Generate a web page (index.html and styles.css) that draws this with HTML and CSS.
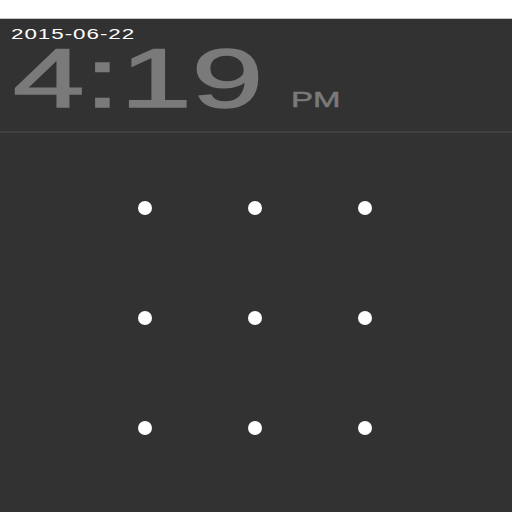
FILE: index.html
```html
<!DOCTYPE html>
<html>
<head>
<meta charset="utf-8">
<link rel="stylesheet" href="styles.css">
</head>
<body>
<div class="statusbar"></div>
<div class="clock">
  <div class="date"><span class="wide">2015-06-22</span></div>
  <div class="time"><span class="wide-time">4:19</span><span class="ampm">PM</span></div>
</div>
<div class="separator"></div>
<div class="pattern">
  <div class="cell"><span class="dot"></span></div>
  <div class="cell"><span class="dot"></span></div>
  <div class="cell"><span class="dot"></span></div>
  <div class="cell"><span class="dot"></span></div>
  <div class="cell"><span class="dot"></span></div>
  <div class="cell"><span class="dot"></span></div>
  <div class="cell"><span class="dot"></span></div>
  <div class="cell"><span class="dot"></span></div>
  <div class="cell"><span class="dot"></span></div>
</div>
</body>
</html>
```

FILE: styles.css
```css
html, body {
  margin: 0;
  padding: 0;
  background: #323232;
  height: 100%;
  overflow: hidden;
  font-family: "Liberation Sans", Arial, sans-serif;
}
.statusbar {
  height: 18px;
  background: #ffffff;
  border-bottom: 1px solid #c4c4c4;
}
.clock {
  height: 112px;
  padding-left: 11px;
  display: flex;
  flex-direction: column;
}
.date {
  height: 26px;
  line-height: 26px;
  font-size: 14px;
  color: #ffffff;
  padding-top: 2px;
}
.wide {
  display: inline-block;
  transform: scaleX(1.6);
  transform-origin: left center;
  letter-spacing: 0.6px;
}
.time {
  display: flex;
  align-items: baseline;
  height: 60px;
  line-height: 60px;
  color: #7a7a7a;
}
.wide-time {
  display: inline-block;
  font-size: 84px;
  transform: scaleX(1.53);
  transform-origin: left center;
  -webkit-text-stroke: 1.5px #7a7a7a;
  width: 278px;
  margin-left: 2px;
  margin-top: 1px;
}
.ampm {
  display: inline-block;
  font-size: 22px;
  transform: scaleX(1.5);
  transform-origin: left center;
  -webkit-text-stroke: 0.5px #7a7a7a;
}
.separator {
  height: 2px;
  background: #3f3f3f;
}
.pattern {
  display: grid;
  grid-template-columns: repeat(3, 110px);
  grid-auto-rows: 110px;
  margin-left: 90px;
  margin-top: 20px;
}
.cell {
  display: flex;
  align-items: center;
  justify-content: center;
}
.dot {
  width: 14px;
  height: 14px;
  border-radius: 50%;
  background: #ffffff;
}
```
